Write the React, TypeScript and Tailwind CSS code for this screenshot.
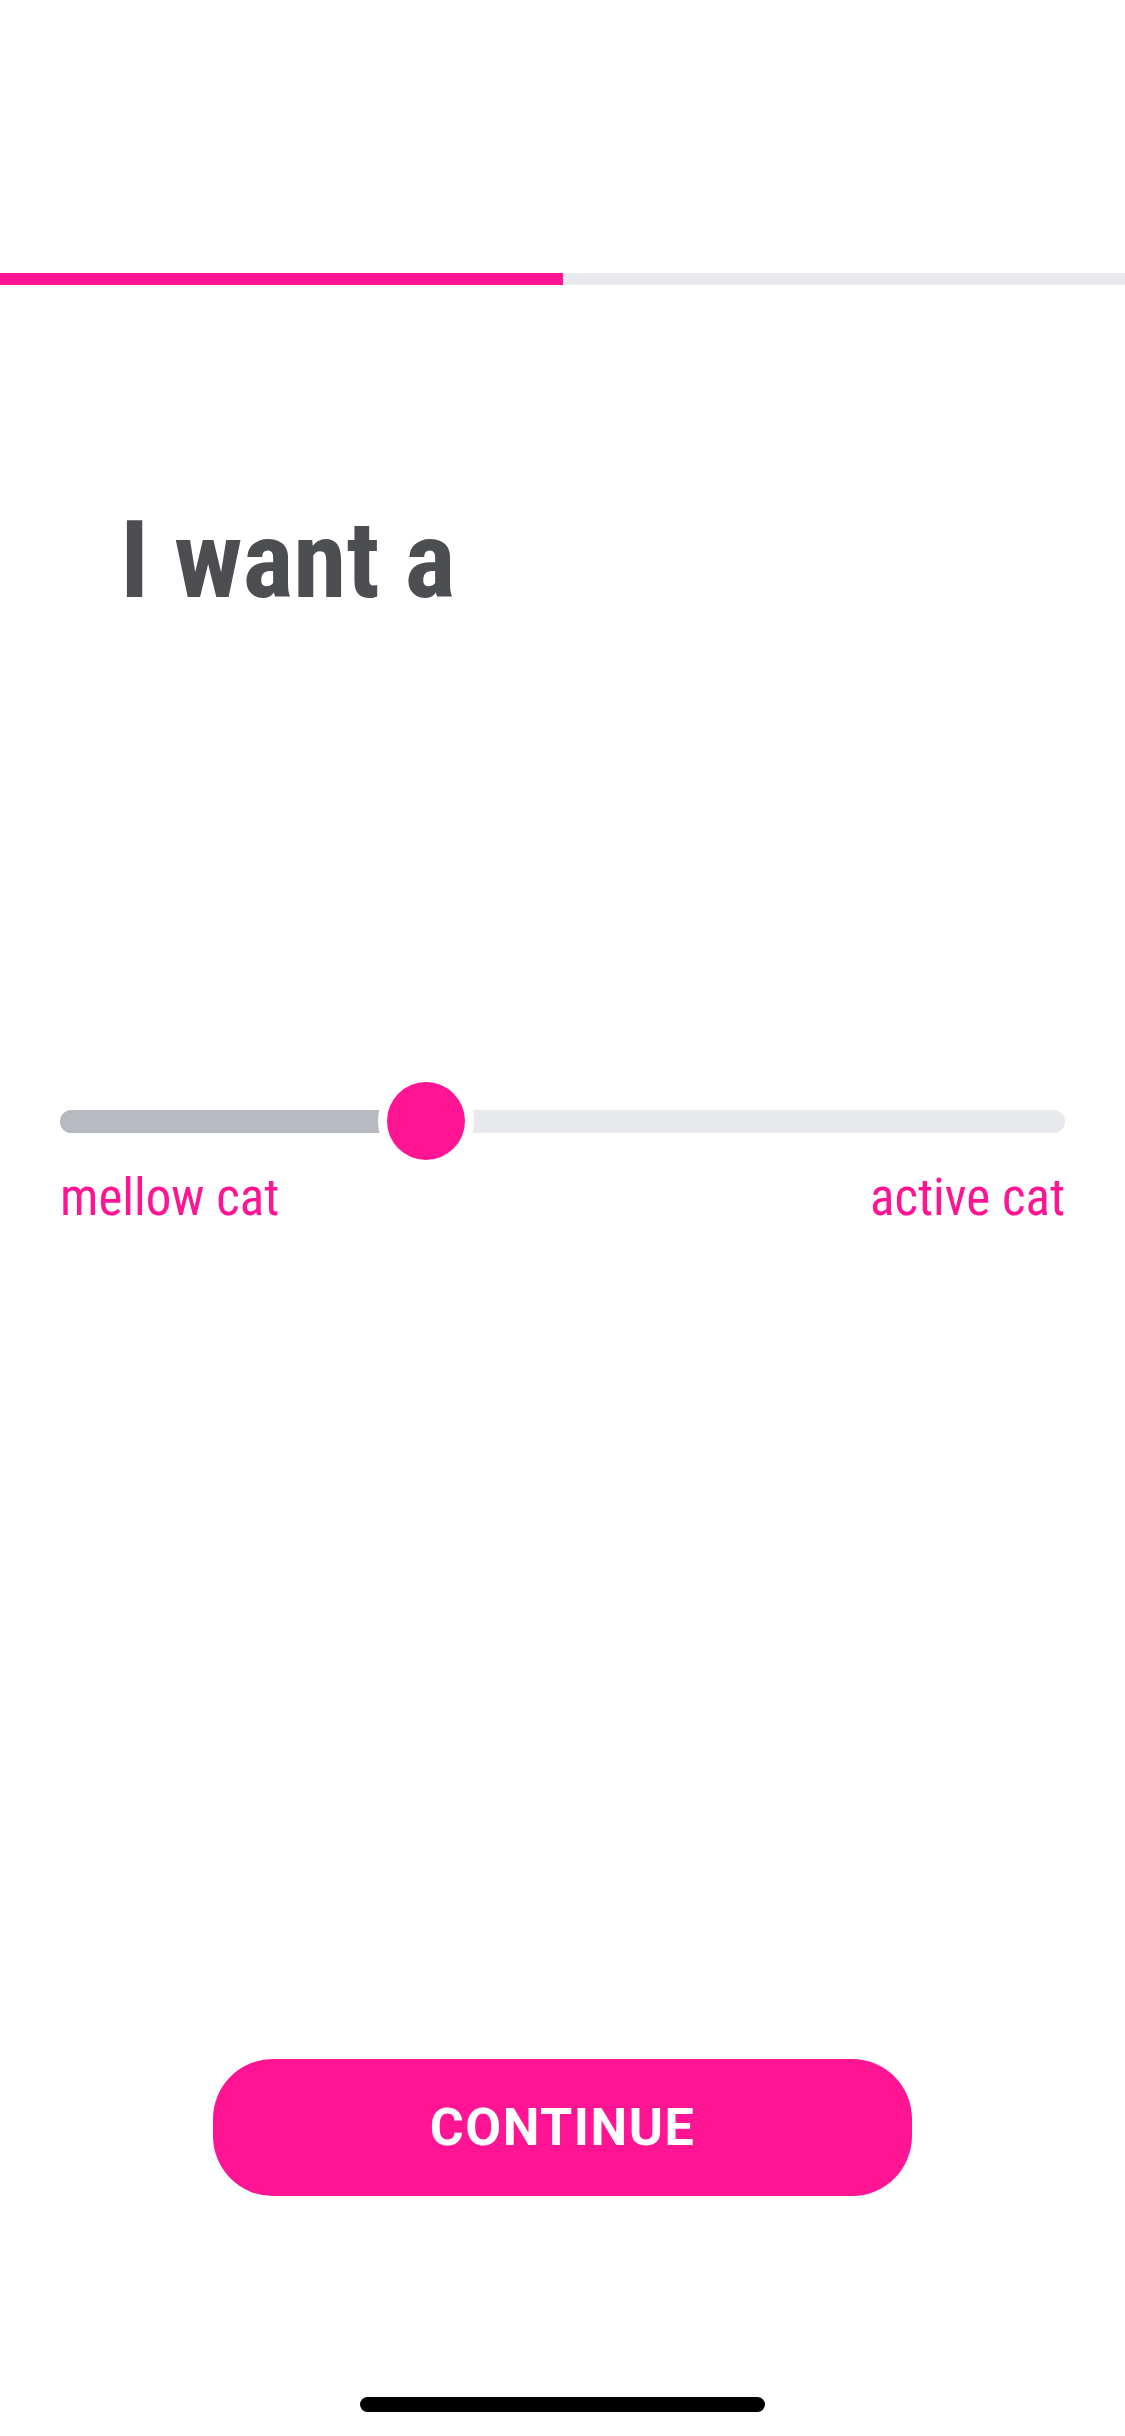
import React from "react";

export default function App() {
  const value = 36.4;
  return (
    <div
      className="w-[1125px] h-[2436px] bg-white flex flex-col overflow-hidden"
      style={{ fontFamily: '"Roboto Condensed", Roboto, "Liberation Sans", sans-serif' }}
    >
      <div className="pt-[273px]">
        <div className="flex h-[12px] w-full">
          <div className="w-1/2 bg-[#ff1493]" />
          <div className="flex-1 bg-[#e8e9ec]" />
        </div>
      </div>

      <h1 className="mt-[221px] pl-[120px] text-[108px] leading-none font-bold text-[#4d4e52]">
        I want a
      </h1>

      <div className="mt-[459px] px-[60px]">
        <div className="relative h-[96px] flex items-center">
          <div className="relative h-[23px] w-full rounded-full bg-[#e8e9ec] overflow-hidden">
            <div className="h-full bg-[#b6bac0]" style={{ width: `${value}%` }} />
          </div>
          <div
            className="absolute top-0 w-[96px] h-[96px] -ml-[48px] rounded-full bg-white flex items-center justify-center"
            style={{ left: `${value}%` }}
          >
            <div className="w-[78px] h-[78px] rounded-full bg-[#ff1493]" />
          </div>
        </div>
        <div className="mt-[3px] flex justify-between text-[51px] leading-none text-[#ff1493]">
          <span>mellow cat</span>
          <span>active cat</span>
        </div>
      </div>

      <button
        className="mt-[836px] mx-auto w-[699px] h-[137px] rounded-[60px] bg-[#ff1493] text-white text-[52px] font-bold tracking-[1.5px] flex items-center justify-center"
        style={{ fontFamily: 'Roboto, "Liberation Sans", sans-serif' }}
      >
        CONTINUE
      </button>

      <div className="mt-[201px] mx-auto w-[405px] h-[15px] rounded-full bg-black" />
    </div>
  );
}
